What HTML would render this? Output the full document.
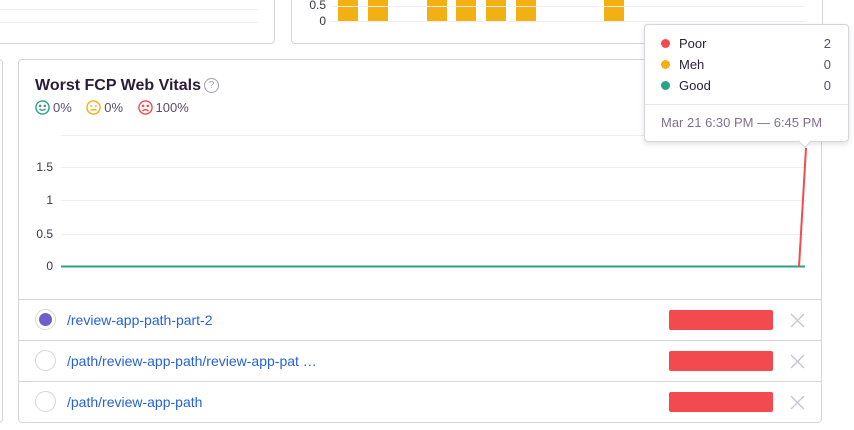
<!DOCTYPE html><html><head><style>
body{margin:0;width:854px;height:430px;overflow:hidden;background:#fff;font-family:"Liberation Sans",sans-serif;position:relative}
.a{position:absolute}
.card{position:absolute;border:1px solid #d8d3df;border-radius:4px;background:#fff}
.lbl{position:absolute;font-size:12px;color:#3e3446;text-align:right;width:30px}
.bar{position:absolute;top:0;height:21px;width:20px;background:#f2b012}
.row{position:absolute;left:0;right:0;height:41px;border-top:1px solid #d8d3df}
.rad{position:absolute;left:16px;top:9px;width:21px;height:21px;border:1px solid #d8d3df;border-radius:50%;box-sizing:border-box}
.lnk{position:absolute;left:48px;top:12px;font-size:14px;color:#2562d4}
.rb{position:absolute;left:650px;top:10px;width:104px;height:20px;background:#f34a50;border-radius:2px}
.x{position:absolute;left:771px;top:13px}
.f{display:inline-block;vertical-align:-3px;margin-right:3px}
</style></head><body>
<div class="card" style="left:-10px;top:-10px;width:283px;height:52px"></div>
<div class="a" style="left:0;top:9px;width:258px;height:1px;background:#f0eef3"></div>
<div class="a" style="left:0;top:22px;width:258px;height:1px;background:#f0eef3"></div>
<div class="card" style="left:291px;top:-10px;width:530px;height:52px"></div>
<div class="lbl" style="left:296px;top:-2px">0.5</div>
<div class="lbl" style="left:296px;top:14px">0</div>
<div class="bar" style="left:338px"></div><div class="bar" style="left:368px"></div><div class="bar" style="left:427px"></div><div class="bar" style="left:456px"></div><div class="bar" style="left:486px"></div><div class="bar" style="left:516px"></div><div class="bar" style="left:604px"></div>
<div class="a" style="left:330px;top:6px;width:475px;height:1px;background:#f0eef3"></div>
<div class="a" style="left:330px;top:21px;width:475px;height:1px;background:#f0eef3"></div>
<div class="card" style="left:-10px;top:59px;width:11px;height:362px"></div>
<div class="card" style="left:18px;top:59px;width:802px;height:362px">
<div class="a" style="left:16px;top:17px;font-size:16px;font-weight:bold;color:#2b1d38">Worst FCP Web Vitals</div>
<div class="a" style="left:185px;top:18px;width:13px;height:13px;border:1.5px solid #a49bb0;border-radius:50%;font-size:10px;color:#a49bb0;text-align:center;line-height:13px;box-sizing:content-box">?</div>
<div class="a" style="left:16px;top:40px;font-size:13px;color:#5a4e66;white-space:nowrap">
<svg class="f" width="15" height="15" viewBox="0 0 16 16" fill="none" stroke="#2ba185" stroke-width="1.5"><circle cx="8" cy="8" r="7"/><circle cx="5.5" cy="6.3" r=".6" fill="#2ba185"/><circle cx="10.5" cy="6.3" r=".6" fill="#2ba185"/><path d="M4.8 9.5q3.2 3 6.4 0"/></svg>0% &nbsp;&nbsp;&nbsp;<svg class="f" width="15" height="15" viewBox="0 0 16 16" fill="none" stroke="#f2b012" stroke-width="1.5"><circle cx="8" cy="8" r="7"/><path d="M4.5 6.5h2M9.5 6.5h2M4.8 10.5h6.4"/></svg>0% &nbsp;&nbsp;&nbsp;<svg class="f" width="15" height="15" viewBox="0 0 16 16" fill="none" stroke="#f34a50" stroke-width="1.5"><circle cx="8" cy="8" r="7"/><circle cx="5.5" cy="6.3" r=".6" fill="#f34a50"/><circle cx="10.5" cy="6.3" r=".6" fill="#f34a50"/><path d="M4.8 11.8q3.2-3 6.4 0"/></svg>100%</div>
<div class="lbl" style="left:4px;top:100px">1.5</div>
<div class="lbl" style="left:4px;top:133px">1</div>
<div class="lbl" style="left:4px;top:167px">0.5</div>
<div class="lbl" style="left:4px;top:199px">0</div>
<div class="a" style="left:42px;top:75px;width:745px;height:1px;background:#f0eef3"></div>
<div class="a" style="left:42px;top:107px;width:745px;height:1px;background:#f0eef3"></div>
<div class="a" style="left:42px;top:140px;width:745px;height:1px;background:#f0eef3"></div>
<div class="a" style="left:42px;top:174px;width:745px;height:1px;background:#f0eef3"></div>
<svg class="a" style="left:0;top:0" width="802" height="240"><line x1="42" y1="206.5" x2="786" y2="206.5" stroke="#2ba185" stroke-width="2"/><line x1="780" y1="207" x2="787" y2="88" stroke="#f34a50" stroke-width="2"/></svg>
<div class="row" style="top:239px"><div class="rad"><div class="a" style="left:3px;top:3px;width:13px;height:13px;border-radius:50%;background:#6c5fc7"></div></div><div class="lnk">/review-app-path-part-2</div><div class="rb"></div><svg class="x" width="15" height="15"><path d="M1 1L14 14M14 1L1 14" stroke="#c9c4d1" stroke-width="1.3"/></svg></div>
<div class="row" style="top:280px"><div class="rad"></div><div class="lnk">/path/review-app-path/review-app-pat …</div><div class="rb"></div><svg class="x" width="15" height="15"><path d="M1 1L14 14M14 1L1 14" stroke="#c9c4d1" stroke-width="1.3"/></svg></div>
<div class="row" style="top:321px"><div class="rad"></div><div class="lnk">/path/review-app-path</div><div class="rb"></div><svg class="x" width="15" height="15"><path d="M1 1L14 14M14 1L1 14" stroke="#c9c4d1" stroke-width="1.3"/></svg></div>
</div>
<div class="a" style="left:644px;top:24px;width:203px;height:116px;border:1px solid #d8d3df;border-radius:4px;background:#fff;box-shadow:0 2px 6px rgba(0,0,0,.12);font-size:13px;color:#2b1d38">
<div class="a" style="left:16px;top:11px;width:170px"><span style="display:inline-block;width:9px;height:9px;border-radius:50%;background:#f34a50;margin-right:9px"></span>Poor<span style="float:right;color:#5a4e66">2</span></div>
<div class="a" style="left:16px;top:32px;width:170px"><span style="display:inline-block;width:9px;height:9px;border-radius:50%;background:#f2b012;margin-right:9px"></span>Meh<span style="float:right;color:#5a4e66">0</span></div>
<div class="a" style="left:16px;top:53px;width:170px"><span style="display:inline-block;width:9px;height:9px;border-radius:50%;background:#2ba185;margin-right:9px"></span>Good<span style="float:right;color:#5a4e66">0</span></div>
<div class="a" style="left:0;top:79px;width:203px;height:1px;background:#e7e3ec"></div>
<div class="a" style="left:16px;top:90px;color:#80708f">Mar 21 6:30 PM — 6:45 PM</div>
<div class="a" style="left:155px;top:111px;width:9px;height:9px;background:#fff;border-right:1px solid #d8d3df;border-bottom:1px solid #d8d3df;transform:rotate(45deg)"></div>
</div>
</body></html>
